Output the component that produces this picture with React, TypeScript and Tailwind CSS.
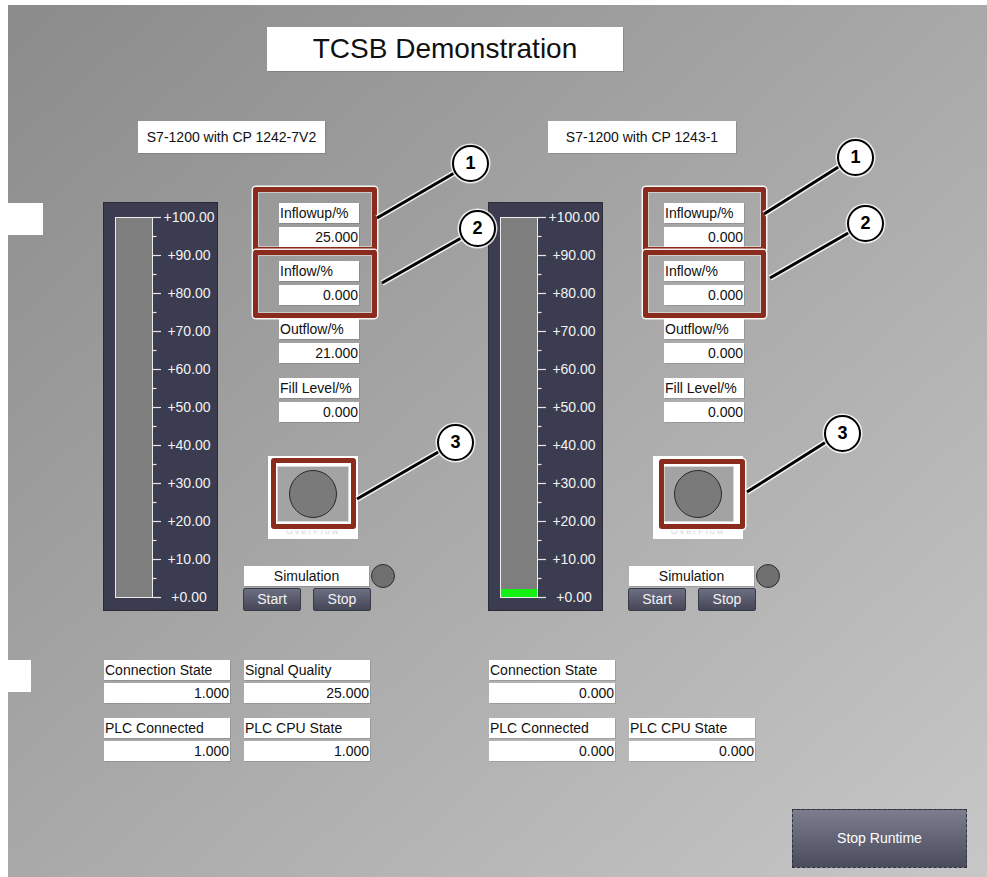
import React from "react";

type Reading = { label: string; value: string };

const box = "bg-white shadow-[1px_1px_0_rgba(0,0,0,0.12)]";

const scale = ["+100.00", "+90.00", "+80.00", "+70.00", "+60.00", "+50.00", "+40.00", "+30.00", "+20.00", "+10.00", "+0.00"];

const Tank = ({ level }: { level: number }) => (
  <div className="flex h-[409px] w-[115px] border border-[#2a2b37] bg-[#3b3c4f] pl-[11px] pt-[4px]">
    <div className="mt-[10px] flex h-[381px] w-[38px] flex-col justify-end border-[1.5px] border-[#ececec] bg-[#7e7e7e]">
      {level > 0 && <div className="h-[8px] w-full bg-[#14f014]" />}
    </div>
    <svg width="10" height="400" className="shrink-0">
      {scale.map((_, i) => (
        <line key={"M" + i} x1="0" x2="8" y1={10.5 + 38 * i} y2={10.5 + 38 * i} stroke="#e4e4e4" strokeWidth="1.2" />
      ))}
      {scale.slice(1).map((_, i) => (
        <line key={"m" + i} x1="0" x2="3.5" y1={29.5 + 38 * i} y2={29.5 + 38 * i} stroke="#e4e4e4" strokeWidth="1.2" />
      ))}
    </svg>
    <div className="flex h-[400px] w-[52px] flex-col justify-between text-center text-[14px] leading-5 text-[#f2f2f2]">
      {scale.map((s) => (
        <span key={s}>{s}</span>
      ))}
    </div>
  </div>
);

const Station = ({
  fields,
  level,
  bottom,
  className,
}: {
  fields: Reading[];
  level: number;
  bottom: (Reading | null)[];
  className: string;
}) => (
  <div className={`flex w-[292px] flex-col ${className}`}>
    <div className="flex">
      <Tank level={level} />
      <div className="ml-[25px] flex w-[152px] flex-col pt-px">
        <div className="ml-[36px] flex w-[80px] flex-col">
          {fields.map((f, i) => (
            <div key={f.label} className={i === 0 ? "" : i === 3 ? "mt-[15px]" : "mt-[14px]"}>
              <div className={`${box} h-5 px-px leading-5`}>{f.label}</div>
              <div className={`${box} mt-1 h-5 px-px text-right leading-5`}>{f.value}</div>
            </div>
          ))}
        </div>

        {/* overflow lamp button */}
        <div className="ml-[25px] mt-[34px] flex h-[83px] w-[90px] flex-col items-center bg-white pt-[10px]">
          <div className="flex h-[56px] w-[72px] items-center justify-center border border-[#dadada] bg-[#a3a3a3]">
            <div className="h-[48px] w-[48px] rounded-full border-[1.5px] border-[#2a2a2a] bg-[#7a7a7a]" />
          </div>
          <span className="mt-[3px] text-[9px] leading-3 tracking-[2px] text-[#d4d4d4]">OverFlow</span>
        </div>

        <div className="mt-[25px] flex h-6 items-center">
          <div className={`${box} ml-px h-5 w-[125px] text-center leading-5`}>Simulation</div>
          <div className="ml-[2px] h-6 w-6 rounded-full border-[1.5px] border-[#2f2f2f] bg-[#6f6f6f]" />
        </div>
        <div className="flex">
          <button className="h-[23px] w-[58px] rounded-[2px] border border-[#393a47] bg-linear-to-b from-[#6c6e82] to-[#464858] text-[14px] text-[#f2f2f2]">
            Start
          </button>
          <button className="ml-[12px] h-[23px] w-[58px] rounded-[2px] border border-[#393a47] bg-linear-to-b from-[#6c6e82] to-[#464858] text-[14px] text-[#f2f2f2]">
            Stop
          </button>
        </div>
      </div>
    </div>

    <div className="ml-px mt-[49px] grid grid-cols-[126px_126px] gap-x-[14px] gap-y-[15px]">
      {bottom.map((r, i) =>
        r ? (
          <div key={i}>
            <div className={`${box} h-5 px-px leading-5`}>{r.label}</div>
            <div className={`${box} mt-[3px] h-5 px-px text-right leading-5`}>{r.value}</div>
          </div>
        ) : (
          <div key={i} />
        )
      )}
    </div>
  </div>
);

const red =
  "absolute rounded-[3px] border-[5px] border-[#8b2b1e] shadow-[0_0_0_1.5px_rgba(255,255,255,0.9),inset_0_0_0_1px_rgba(255,255,255,0.45)]";
const badge =
  "absolute flex h-[37px] w-[37px] items-center justify-center rounded-full border-[2.5px] border-black bg-white text-[18px] font-bold text-black shadow-[0_0_0_1.5px_rgba(255,255,255,0.8)]";

const lines = [
  [377, 218, 456, 172],
  [382, 283, 463, 237],
  [357, 499, 440, 451],
  [764, 214, 840, 166],
  [770, 278, 850, 232],
  [747, 492, 826, 442],
];

export default function App() {
  return (
    <div className="relative h-[877px] w-[987px] overflow-hidden bg-white pl-[8px] pt-[5px] font-[family-name:'Liberation_Sans',Arial,sans-serif] text-[14px] text-[#111]">
      <div className="flex h-full w-full flex-col bg-linear-to-br from-[#8b8b8b] to-[#c7c7c7]">
        <div className={`${box} ml-[259px] mt-[22px] flex h-[44px] w-[356px] items-center justify-center text-[28px]`}>
          TCSB Demonstration
        </div>

        <div className="mt-[50px] flex">
          <div className={`${box} ml-[130px] flex h-[32px] w-[187px] items-center justify-center`}>
            S7-1200 with CP 1242-7V2
          </div>
          <div className={`${box} ml-[223px] flex h-[32px] w-[188px] items-center justify-center`}>
            S7-1200 with CP 1243-1
          </div>
        </div>

        <div className="mt-[49px] flex items-start">
          <div className="flex w-[35px] flex-col">
            <div className="mt-px h-[32px] w-[35px] bg-white" />
            <div className="mt-[425px] h-[32px] w-[23px] bg-white" />
          </div>
          <Station
            className="ml-[60px]"
            level={0}
            fields={[
              { label: "Inflowup/%", value: "25.000" },
              { label: "Inflow/%", value: "0.000" },
              { label: "Outflow/%", value: "21.000" },
              { label: "Fill Level/%", value: "0.000" },
            ]}
            bottom={[
              { label: "Connection State", value: "1.000" },
              { label: "Signal Quality", value: "25.000" },
              { label: "PLC Connected", value: "1.000" },
              { label: "PLC CPU State", value: "1.000" },
            ]}
          />
          <Station
            className="ml-[93px]"
            level={1}
            fields={[
              { label: "Inflowup/%", value: "0.000" },
              { label: "Inflow/%", value: "0.000" },
              { label: "Outflow/%", value: "0.000" },
              { label: "Fill Level/%", value: "0.000" },
            ]}
            bottom={[
              { label: "Connection State", value: "0.000" },
              null,
              { label: "PLC Connected", value: "0.000" },
              { label: "PLC CPU State", value: "0.000" },
            ]}
          />
        </div>

        <div className="mt-[48px] flex justify-end pr-[20px]">
          <button className="h-[59px] w-[175px] border border-dashed border-[#30313c] bg-linear-to-b from-[#7c7e90] to-[#4a4b5c] text-[14px] text-white">
            Stop Runtime
          </button>
        </div>
      </div>

      {/* annotation layer */}
      <div className="pointer-events-none absolute inset-0">
        <div className={`${red} left-[253px] top-[187px] h-[65px] w-[124px]`} />
        <div className={`${red} left-[253px] top-[250px] h-[68px] w-[124px]`} />
        <div className={`${red} left-[271px] top-[458px] h-[71px] w-[85px]`} />
        <div className={`${red} left-[643px] top-[187px] h-[65px] w-[123px]`} />
        <div className={`${red} left-[643px] top-[250px] h-[68px] w-[123px]`} />
        <div className={`${red} left-[659px] top-[459px] h-[70px] w-[86px]`} />

        <svg width="987" height="877" className="absolute left-0 top-0">
          {lines.map(([x1, y1, x2, y2], i) => (
            <g key={i}>
              <line x1={x1} y1={y1} x2={x2} y2={y2} stroke="white" strokeOpacity="0.85" strokeWidth="6" />
              <line x1={x1} y1={y1} x2={x2} y2={y2} stroke="black" strokeWidth="3" />
            </g>
          ))}
        </svg>

        <div className={`${badge} left-[452px] top-[145px]`}>1</div>
        <div className={`${badge} left-[459px] top-[210px]`}>2</div>
        <div className={`${badge} left-[437px] top-[424px]`}>3</div>
        <div className={`${badge} left-[837px] top-[139px]`}>1</div>
        <div className={`${badge} left-[847px] top-[205px]`}>2</div>
        <div className={`${badge} left-[824px] top-[415px]`}>3</div>
      </div>
    </div>
  );
}
